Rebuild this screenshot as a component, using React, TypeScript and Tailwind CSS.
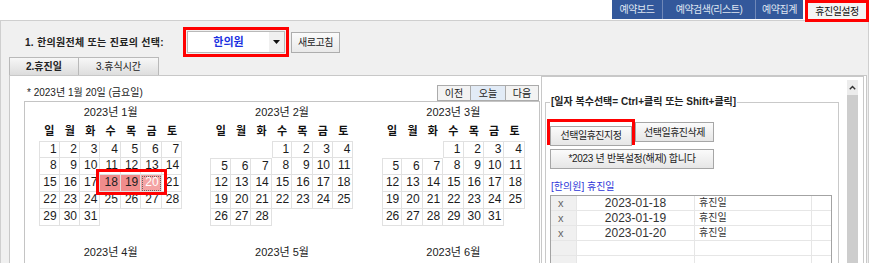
import React from "react";

type MonthProps = {
  month: number;
  first: number;
  days: number;
  marks?: boolean;
  titleOnly?: boolean;
};

const weekdays = ["일", "월", "화", "수", "목", "금", "토"];

// lower row is scrolled out of view, only its titles show
const months: MonthProps[] = [
  { month: 1, first: 0, days: 31, marks: true },
  { month: 2, first: 3, days: 28 },
  { month: 3, first: 3, days: 31 },
  { month: 4, first: 6, days: 30, titleOnly: true },
  { month: 5, first: 1, days: 31, titleOnly: true },
  { month: 6, first: 4, days: 30, titleOnly: true },
];

const holidays = ["2023-01-18", "2023-01-19", "2023-01-20"];

const Month = ({ month, first, days, marks, titleOnly }: MonthProps) => {
  const cells: (number | null)[] = [
    ...Array(first).fill(null),
    ...Array.from({ length: days }, (_, i) => i + 1),
  ];

  return (
    <div className="relative h-[140px]">
      <div className="h-[20px] text-center text-[11px] leading-[20px] text-[#222]">
        2023년 {month}월
      </div>
      {!titleOnly && (
        <>
          <div className="mx-auto grid h-[19px] w-[143px] grid-cols-7 items-center text-center text-[11px] font-bold text-[#111]">
            {weekdays.map((w) => (
              <span key={w}>{w}</span>
            ))}
          </div>
          <div className="mx-auto grid w-[143px] grid-cols-7">
            {cells.map((d, i) => {
              if (d === null) return <div key={i} className="h-[17px]" />;
              const top = i < 7 || cells[i - 7] === null;
              const left = i % 7 === 0 || cells[i - 1] === null;
              const picked = marks && (d === 18 || d === 19);
              const focus = marks && d === 20;
              return (
                <div
                  key={i}
                  className={`h-[17px] border-r border-b border-[#e1e1e1] pr-[2px] text-right text-[12px] leading-[15px] ${top ? "border-t" : ""} ${left ? "border-l" : ""} ${picked ? "bg-[#f08c8c] text-[#222]" : ""} ${focus ? "bg-[#f4a4a4] text-white outline-1 outline-dotted outline-[#666] -outline-offset-2" : ""} ${!picked && !focus ? "bg-white text-[#1c1c1c]" : ""}`}
                >
                  {d}
                </div>
              );
            })}
          </div>
        </>
      )}
      {marks && (
        <div className="absolute left-[71px] top-[67px] h-[26px] w-[71px] border-[3px] border-[#f00]" />
      )}
    </div>
  );
};

const App = () => {
  return (
    <div className="h-[263px] w-[870px] overflow-hidden bg-white font-['Liberation_Sans','Noto_Sans_CJK_KR',sans-serif] text-[#222]">
      {/* top menu tabs */}
      <div className="flex h-[20px] items-start justify-end pr-px">
        <div className="flex h-[19px] bg-[#33589b] text-[10px] tracking-[-0.5px] text-[#dfe5f1]">
          <div className="flex w-[51px] items-center justify-center border-r border-[#7088b8]">예약보드</div>
          <div className="flex w-[93px] items-center justify-center border-r border-[#7088b8]">예약검색(리스트)</div>
          <div className="flex w-[47px] items-center justify-center">예약집계</div>
        </div>
        <div className="relative z-10 ml-[2px] flex h-[22px] w-[64px] items-center justify-center border-[3px] border-[#f00] bg-[#f4f4f4] text-[10px] tracking-[-0.5px] text-[#111]">
          휴진일설정
        </div>
      </div>

      {/* main panel */}
      <div className="mr-px h-[243px] border-l border-r border-t border-[#cfcfcf] bg-[#f0f0f0]">
        <div className="flex h-[36px] items-center pl-[24px] pt-[6px]">
          <div className="w-[158px] text-[10px] font-bold tracking-[0.3px] text-[#222]">1. 한의원전체 또는 진료의 선택:</div>
          <div className="h-[30px] w-[106px] border-[3px] border-[#f00] p-px">
            <div className="flex h-full border border-[#b9b9b9] bg-white">
              <div className="flex flex-1 items-center justify-center text-[11px] font-bold text-[#1a2fe0]">한의원</div>
              <div className="flex w-[15px] items-center justify-center bg-[#f0f0f0]">
                <svg width="7" height="4" viewBox="0 0 7 4">
                  <path d="M0 0h7L3.5 4z" fill="#111" />
                </svg>
              </div>
            </div>
          </div>
          <button className="ml-[2px] h-[21px] w-[49px] border border-[#adadad] bg-gradient-to-b from-[#fbfbfb] to-[#e9e9e9] text-[10px] tracking-[-0.5px] text-[#222]">
            새로고침
          </button>
        </div>

        {/* sub tabs */}
        <div className="ml-[8px] flex h-[18px] text-[10px]">
          <div className="flex w-[70px] items-center justify-center border border-b-0 border-[#b9b9b9] bg-gradient-to-b from-[#f7f7f7] to-[#dcdcdc] font-bold">
            2.휴진일
          </div>
          <div className="flex w-[80px] items-center justify-center border-t border-r border-[#b9b9b9] bg-gradient-to-b from-[#f7f7f7] to-[#dedede]">
            3.휴식시간
          </div>
        </div>

        {/* content */}
        <div className="ml-[8px] flex h-[190px] w-[858px] border border-[#c8c8c8] bg-white">
          {/* calendars */}
          <div className="w-[531px] pl-[14px]">
            <div className="flex h-[25px] items-end">
              <div className="ml-[3px] h-[15px] flex-1 text-[10px] leading-[14px]">* 2023년 1월 20일 (금요일)</div>
              <div className="mr-[2px] flex h-[16px] text-[10px]">
                <div className="flex w-[34px] items-center justify-center border border-[#ababab] bg-[#f3f3f3]">이전</div>
                <div className="flex w-[34px] items-center justify-center border-y border-[#ababab] bg-[#e2ebf6]">오늘</div>
                <div className="flex w-[34px] items-center justify-center border border-[#ababab] bg-[#f3f3f3]">다음</div>
              </div>
            </div>
            <div className="grid h-[170px] w-[516px] grid-cols-3 border border-[#c4c4c4]">
              {months.map((m) => (
                <Month key={m.month} {...m} />
              ))}
            </div>
          </div>

          {/* right panel */}
          <div className="flex w-[323px] items-start border-x border-t border-[#c8c8c8]">
            <fieldset className="ml-[3px] mt-[18px] h-[200px] w-[294px] border border-[#c9c9c9]">
              <legend className="ml-[4px] px-px text-[10px] font-bold leading-[14px] text-[#222]">
                [일자 복수선택= Ctrl+클릭 또는 Shift+클릭]
              </legend>
              <div className="ml-px mt-[10px] flex items-center">
                <div className="h-[26px] w-[88px] border-[3px] border-[#f00]">
                  <button className="h-full w-full border border-[#a6a6a6] bg-gradient-to-b from-[#fbfbfb] to-[#e6e6e6] text-[10px] tracking-[-0.5px]">
                    선택일휴진지정
                  </button>
                </div>
                <button className="h-[20px] w-[79px] border border-[#a6a6a6] bg-gradient-to-b from-[#fbfbfb] to-[#e6e6e6] text-[10px] tracking-[-0.5px]">
                  선택일휴진삭제
                </button>
              </div>
              <button className="ml-[4px] mt-[2px] h-[20px] w-[164px] border border-[#a6a6a6] bg-gradient-to-b from-[#fbfbfb] to-[#e6e6e6] text-[10px] tracking-[-0.3px]">
                *2023 년 반복설정(해제) 합니다
              </button>
              <div className="ml-[5px] mt-[11px] h-[14px] text-[10px] leading-[14px] text-[#2d36d8]">[한의원] 휴진일</div>
              <div className="ml-[4px] mt-px w-[282px] border border-[#a3a3a3]">
                {[...holidays, "", ""].map((h, i) => (
                  <div key={i} className="flex h-[15px] border-b border-[#e6e6e6] text-[12px] leading-[14px]">
                    <div className="w-[26px] border-r border-[#e6e6e6] bg-[#f0f0f0] pl-[7px] text-[11px] text-[#666]">{h ? "x" : ""}</div>
                    <div className="w-[118px] border-r border-[#e6e6e6] text-center text-[#333]">{h}</div>
                    <div className="w-[117px] border-r border-[#e6e6e6] pl-[4px] text-[10px] text-[#333]">{h ? "휴진일" : ""}</div>
                    <div className="flex-1" />
                  </div>
                ))}
              </div>
            </fieldset>
            <div className="ml-[8px] mt-[3px] flex h-[200px] w-[11px] flex-col">
              <div className="flex h-[15px] items-center justify-center bg-[#ececec]">
                <svg width="7" height="5" viewBox="0 0 7 5">
                  <path d="M0.8 4.2L3.5 1.5L6.2 4.2" fill="none" stroke="#333" strokeWidth="1.4" />
                </svg>
              </div>
              <div className="flex-1 bg-[#cdcdcd]" />
            </div>
          </div>
        </div>
      </div>
    </div>
  );
};

export default App;
